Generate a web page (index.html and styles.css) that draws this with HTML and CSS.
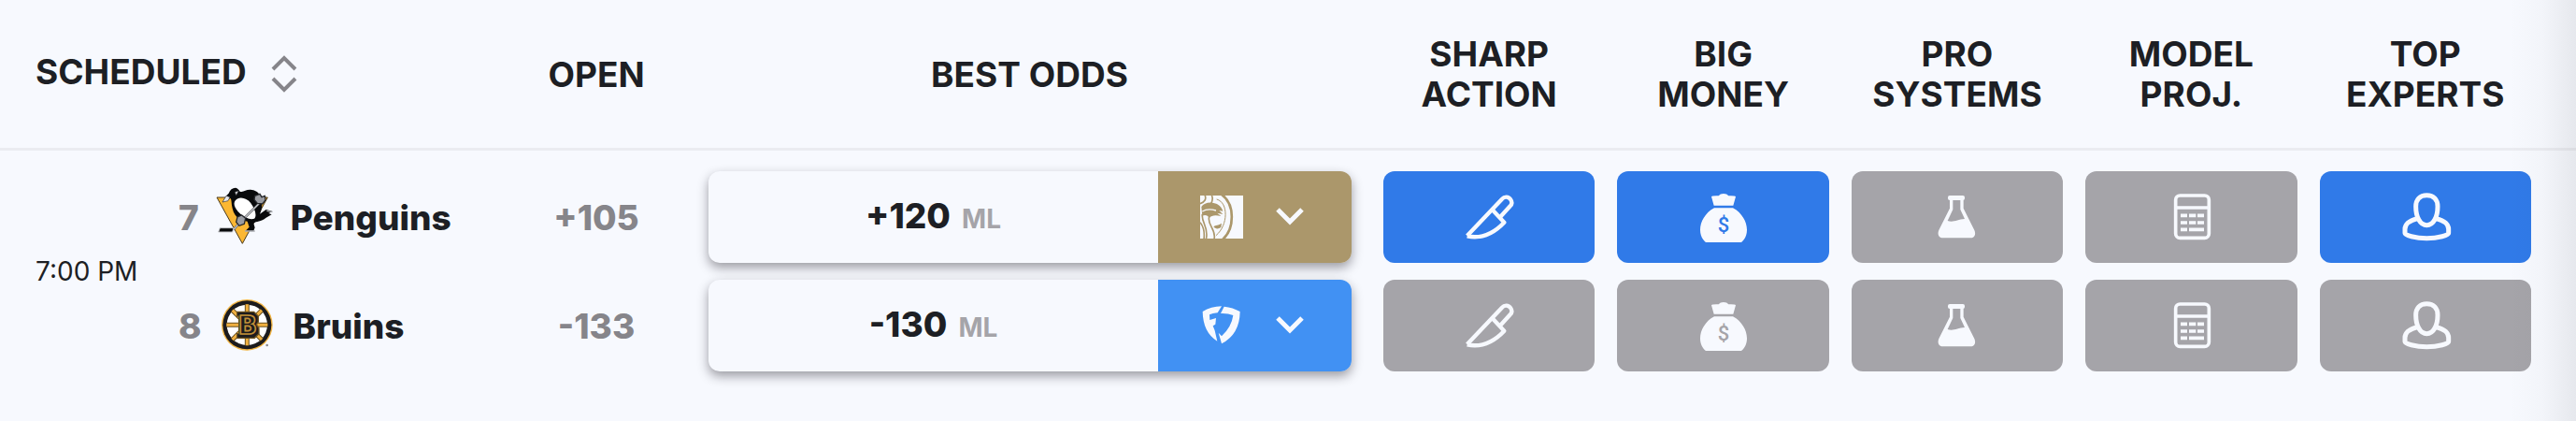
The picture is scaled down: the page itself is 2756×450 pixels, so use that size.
FILE: index.html
```html
<!DOCTYPE html>
<html lang="en">
<head>
<meta charset="utf-8">
<title>Odds</title>
<link rel="stylesheet" href="styles.css">
</head>
<body>
<svg class="sprite" aria-hidden="true">
  <symbol id="knife" viewBox="68 36 180 180">
    <g fill="none" stroke="currentColor" stroke-width="13" stroke-linejoin="round">
      <path d="M88 186 200 68C208 59 221 60 227 69C233 77 232 85 226 91L194 126"/>
      <path d="M169 103 207 143C172 180 130 196 88 187"/>
    </g>
  </symbol>
  <symbol id="bag" viewBox="69 36 180 180">
    <path fill="currentColor" d="M120 61Q122 57 143 58Q148 51 159 51Q170 51 175 58Q196 57 198 61L190 89H128ZM129 97H189C218 112 234 142 234 167C234 185 226 199 216 207H102C92 199 84 185 84 167C84 142 100 112 129 97Z"/>
  </symbol>
  <symbol id="flask" viewBox="70 36 180 180">
    <rect x="130" y="57" width="54" height="15" rx="6" fill="currentColor"/>
    <path fill="currentColor" fill-rule="evenodd" d="M136 65V98L101 168C95 182 102 193 114 193H203C215 193 221 182 215 168L180 98V65ZM146 72V102L129 138C148 145 160 133 184 132L170 102V72Z"/>
  </symbol>
  <symbol id="calc" viewBox="72 36 180 180">
    <g fill="none" stroke="currentColor" stroke-width="11">
      <rect x="113" y="57" width="107" height="136" rx="14"/>
      <path d="M113 96H220"/>
      <path d="M129 121H150M156 121H178M183 121H204M129 144H150M156 144H178M183 144H204M129 166H150M156 166H204"/>
    </g>
  </symbol>
  <symbol id="expert" viewBox="74 36 180 180">
    <g fill="none" stroke="currentColor" stroke-width="15" stroke-linejoin="round">
      <path d="M168 56C190 56 203 70 203 92C203 125 190 152 168 152C146 152 133 125 133 92C133 70 146 56 168 56Z"/>
      <path d="M138 131C110 138 98 150 98 165V178C98 184 130 194 168 194C206 194 238 184 238 178V165C238 150 226 138 198 131"/>
    </g>
  </symbol>
  <symbol id="chevron" viewBox="0 0 32 32">
    <path d="M3 8 16 21 29 8" fill="none" stroke="currentColor" stroke-width="5"/>
  </symbol>
</svg>

<main class="board">
<table class="odds">
  <colgroup>
    <col class="col-time"><col class="col-team"><col class="col-open"><col class="col-best">
    <col><col><col><col><col><col class="col-edge">
  </colgroup>
  <thead>
    <tr>
      <th class="head-scheduled" colspan="2" scope="col">
        <button class="sort" type="button">
          <span class="sort-label">SCHEDULED</span>
          <svg class="sort-icon" viewBox="0 0 28 40" aria-hidden="true"><path d="M2 15 14 3 26 15M2 25 14 37 26 25" fill="none" stroke="currentColor" stroke-width="4"/></svg>
        </button>
      </th>
      <th scope="col">OPEN</th>
      <th scope="col">BEST ODDS</th>
      <th scope="col">SHARP<br>ACTION</th>
      <th scope="col">BIG<br>MONEY</th>
      <th scope="col">PRO<br>SYSTEMS</th>
      <th scope="col">MODEL<br>PROJ.</th>
      <th scope="col">TOP<br>EXPERTS</th>
      <td></td>
    </tr>
  </thead>
  <tbody>
    <tr>
      <td class="time" rowspan="2">7:00 PM</td>
      <td>
        <div class="team">
          <span class="team-number">7</span>
          <svg class="team-logo" viewBox="32 30 192 192" role="img" aria-label="Penguins logo">
            <path d="M38 63H201L120 211Z" fill="#fbb733" stroke="#4a3a1c" stroke-width="3"/>
            <path d="M56 78C64 66 66 58 76 50C80 38 88 32 98 32C106 34 108 40 112 44C124 48 132 36 150 39C166 40 176 52 180 64C186 84 182 104 176 116L196 102L217 108L204 114L214 118L196 128C180 142 164 138 156 146L160 160L156 170H130L142 158L136 140C112 136 94 126 88 98C84 84 86 72 82 66Z" fill="#090a0c"/>
            <path d="M98 72C112 58 134 66 146 80C160 98 168 122 158 131C144 137 118 124 104 106C94 92 90 82 98 72Z" fill="#fff"/>
            <path d="M56 78 68 58 80 62 74 74ZM96 46 108 42 100 56Z" fill="#e8e8ea" stroke="#33353a" stroke-width="2"/>
            <path d="M182 74 106 150 92 166" fill="none" stroke="#45474c" stroke-width="7"/>
            <path d="M182 74 106 150 92 166" fill="none" stroke="#c7c8cc" stroke-width="4"/>
            <path d="M48 161H92L88 174H43Z" fill="#090a0c" stroke="#c7c8cc" stroke-width="3"/>
            <path d="M160 58 176 52 182 62 192 58 194 72 184 84 168 82 158 70Z" fill="#9a9ca2" stroke="#25272b" stroke-width="4"/>
            <path d="M104 126 118 120 130 130 126 148 110 154 100 142Z" fill="#9a9ca2" stroke="#25272b" stroke-width="4"/>
            <path d="M128 171H160M198 106 216 110" stroke="#a9abb0" stroke-width="4"/>
          </svg>
          <span class="team-name">Penguins</span>
        </div>
      </td>
      <td class="open">+105</td>
      <td class="best">
        <div class="offer">
          <button class="offer-price" type="button">+120 <span class="offer-kind">ML</span></button>
          <button class="book book-gold" type="button" aria-haspopup="listbox" aria-label="Choose sportsbook">
            <svg class="book-logo" viewBox="161 86 138 138" aria-hidden="true">
              <path d="M161 86H299V224H161Z" fill="currentColor"/>
              <path class="book-shape" d="M165 122C172 112 188 106 204 110C220 113 230 122 234 136L222 134L234 146L216 142L228 152C212 148 198 148 190 158C186 150 176 146 168 152Z"/>
              <path d="M168 137C182 128 198 130 212 134" fill="none" stroke="currentColor" stroke-width="4"/>
              <g class="book-lines" fill="none" stroke-width="5">
                <path d="M226 80C276 112 272 196 230 230" stroke-width="8"/>
                <path d="M214 98C252 108 252 180 212 214" stroke-width="3"/>
                <path d="M176 84C182 98 176 106 161 112M198 86C204 96 200 104 196 112"/>
                <path d="M168 146C164 172 190 188 180 226M190 154C182 180 214 194 206 226"/>
                <path d="M161 172C172 186 176 204 173 226"/>
              </g>
              <path class="book-shape" d="M204 186C210 180 220 182 230 175L228 188C220 194 210 194 204 186Z"/>
            </svg>
            <svg class="book-chevron" aria-hidden="true"><use href="#chevron"/></svg>
          </button>
        </div>
      </td>
      <td><button class="tile tile-on" type="button" aria-label="Sharp action, Penguins"><svg class="tile-icon"><use href="#knife"/></svg></button></td>
      <td><button class="tile tile-on" type="button" aria-label="Big money, Penguins"><svg class="tile-icon" viewBox="0 0 180 180"><use href="#bag"/><text class="bag-sign" x="90" y="139" text-anchor="middle">$</text></svg></button></td>
      <td><button class="tile" type="button" aria-label="Pro systems, Penguins"><svg class="tile-icon"><use href="#flask"/></svg></button></td>
      <td><button class="tile" type="button" aria-label="Model projections, Penguins"><svg class="tile-icon"><use href="#calc"/></svg></button></td>
      <td><button class="tile tile-on" type="button" aria-label="Top experts, Penguins"><svg class="tile-icon"><use href="#expert"/></svg></button></td>
      <td></td>
    </tr>
    <tr>
      <td>
        <div class="team">
          <span class="team-number">8</span>
          <svg class="team-logo" viewBox="44 378 192 192" role="img" aria-label="Bruins logo">
            <circle cx="138" cy="472" r="82" fill="#f2b544"/>
            <circle cx="138" cy="472" r="78" fill="#1c1b1d"/>
            <circle cx="138" cy="472" r="65" fill="#fff"/>
            <g fill="none" stroke="#6b5220" stroke-width="15"><path d="M138 406V538M72 472H204M91 425 185 519M185 425 91 519"/></g>
            <g fill="none" stroke="#f0b040" stroke-width="9"><path d="M138 406V538M72 472H204M91 425 185 519M185 425 91 519"/></g>
            <path d="M106 430H160L174 444V462L168 471L176 482V500L162 514H106V500H112V444H106Z" fill="#1c1b1d" stroke="#6b5220" stroke-width="4"/>
            <text class="crest" x="140" y="502" text-anchor="middle">B</text>
            <circle cx="202" cy="537" r="4" fill="#8b8b90"/>
          </svg>
          <span class="team-name">Bruins</span>
        </div>
      </td>
      <td class="open">-133</td>
      <td class="best">
        <div class="offer">
          <button class="offer-price" type="button">-130 <span class="offer-kind">ML</span></button>
          <button class="book book-blue" type="button" aria-haspopup="listbox" aria-label="Choose sportsbook">
            <svg class="book-logo" viewBox="161 435 138 138" aria-hidden="true">
              <path fill="currentColor" d="M169 459Q196 443 230 442L217 463Q200 464 191 469L192 486L212 480L210 500L202 505L208 520L216 554Q170 526 169 459ZM238 443Q266 446 289 459Q288 532 230 562L220 527L230 538Q262 508 267 471Q250 464 227 465Z"/>
            </svg>
            <svg class="book-chevron" aria-hidden="true"><use href="#chevron"/></svg>
          </button>
        </div>
      </td>
      <td><button class="tile" type="button" aria-label="Sharp action, Bruins"><svg class="tile-icon"><use href="#knife"/></svg></button></td>
      <td><button class="tile" type="button" aria-label="Big money, Bruins"><svg class="tile-icon" viewBox="0 0 180 180"><use href="#bag"/><text class="bag-sign" x="90" y="139" text-anchor="middle">$</text></svg></button></td>
      <td><button class="tile" type="button" aria-label="Pro systems, Bruins"><svg class="tile-icon"><use href="#flask"/></svg></button></td>
      <td><button class="tile" type="button" aria-label="Model projections, Bruins"><svg class="tile-icon"><use href="#calc"/></svg></button></td>
      <td><button class="tile" type="button" aria-label="Top experts, Bruins"><svg class="tile-icon"><use href="#expert"/></svg></button></td>
      <td></td>
    </tr>
  </tbody>
</table>
</main>
</body>
</html>
```

FILE: styles.css
```css
:root {
  --page: #f7f9fe;
  --ink: #1d1f24;
  --muted: #86858a;
  --soft: #a5a4a9;
  --blue: #307ae8;
}

* { box-sizing: border-box; }

body {
  margin: 0;
  background: var(--page);
  color: var(--ink);
  font-family: Inter, "Liberation Sans", sans-serif;
  font-size: 37px;
  line-height: 43px;
}

button {
  border: 0;
  padding: 0;
  background: none;
  color: inherit;
  font: inherit;
  cursor: pointer;
}

.sprite {
  position: absolute;
  width: 0;
  height: 0;
}

.board {
  position: relative;
  min-height: 100vh;
}

.board::after {
  content: "";
  position: absolute;
  top: 0;
  right: 0;
  bottom: 0;
  width: 72px;
  background: linear-gradient(to right, rgba(29, 31, 36, 0), rgba(29, 31, 36, 0.02) 50%, rgba(29, 31, 36, 0.08));
  pointer-events: none;
}

.odds {
  width: 100%;
  table-layout: fixed;
  border-collapse: separate;
  border-spacing: 0;
}

.col-time { width: 191px; }
.col-team { width: 350px; }
.col-open { width: 194px; }
.col-best { width: 733px; }
.col-edge { width: 36px; }

thead th,
thead td {
  height: 161px;
  padding: 0;
  border-bottom: 3px solid #ebecf1;
  font-weight: 700;
  text-align: center;
  vertical-align: middle;
}

thead .head-scheduled {
  padding-left: 38px;
  text-align: left;
}

.sort {
  display: flex;
  align-items: center;
  gap: 26px;
}

.sort-label { padding-bottom: 6px; }

.sort-icon {
  width: 28px;
  height: 40px;
  color: var(--muted);
}

tbody td {
  padding: 9px 12px;
  vertical-align: middle;
}

tbody tr:first-child td { padding-top: 22px; }
tbody tr:last-child td { padding-bottom: 22px; }

tbody .time {
  padding: 0 0 0 38px;
  font-size: 28px;
}

tbody tr:first-child .time { padding-top: 0; }

.team {
  display: flex;
  align-items: center;
  gap: 17px;
  font-weight: 800;
}

.team-number,
.open { color: var(--muted); }

.team-logo {
  width: 64px;
  height: 64px;
}

tbody td:has(> .team) {
  padding-left: 0;
  padding-right: 0;
}

.crest {
  fill: #1c1b1d;
  stroke: #c08f38;
  stroke-width: 5;
  font-family: "DejaVu Sans", sans-serif;
  font-size: 80px;
  font-weight: 700;
}

.open {
  font-weight: 800;
  text-align: center;
}

tbody .best {
  padding-left: 23px;
  padding-right: 22px;
}

.offer {
  display: flex;
  height: 98px;
  border-radius: 12px;
  background: var(--page);
  box-shadow: 0 5px 12px rgba(29, 27, 36, 0.42);
  overflow: hidden;
}

.offer-price {
  flex: 1;
  font-weight: 800;
}

.offer-kind {
  margin-left: 4px;
  color: var(--soft);
  font-size: 28px;
  font-weight: 700;
}

.book {
  display: flex;
  align-items: center;
  gap: 34px;
  width: 207px;
  padding-left: 45px;
  color: var(--page);
}

.book-gold { background: #ab976b; }
.book-blue { background: #4191f3; }
.book-lines { stroke: #ab976b; }
.book-shape { fill: #ab976b; }

.book-logo {
  width: 46px;
  height: 46px;
}

.book-chevron {
  width: 32px;
  height: 32px;
}

.tile {
  --tile: var(--soft);
  display: flex;
  align-items: center;
  justify-content: center;
  width: 100%;
  height: 98px;
  border-radius: 12px;
  background: var(--tile);
  color: var(--page);
}

.tile-on { --tile: var(--blue); }

.tile-icon {
  width: 60px;
  height: 60px;
}

.bag-sign {
  fill: var(--tile);
  font-family: Roboto, sans-serif;
  font-size: 66px;
  font-weight: 500;
}
```
